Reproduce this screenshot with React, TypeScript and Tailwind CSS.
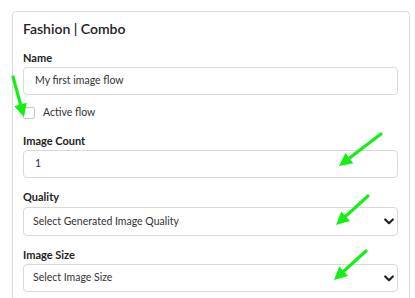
import React from 'react'

const font = { fontFamily: 'Lato, "Open Sans", sans-serif' }

// green annotation arrow, drawn over the form
function Arrow({ x1, y1, x2, y2 }: { x1: number; y1: number; x2: number; y2: number }) {
  const dx = x2 - x1
  const dy = y2 - y1
  const len = Math.sqrt(dx * dx + dy * dy)
  const ux = dx / len
  const uy = dy / len
  const hl = 13
  const hw = 6.5
  const bx = x2 - ux * hl
  const by = y2 - uy * hl
  const p1 = `${bx - uy * hw},${by + ux * hw}`
  const p2 = `${bx + uy * hw},${by - ux * hw}`
  return (
    <g>
      <line x1={x1} y1={y1} x2={bx + ux * 2} y2={by + uy * 2} stroke="#14f014" strokeWidth={3.2} strokeLinecap="round" />
      <polygon points={`${x2},${y2} ${p1} ${p2}`} fill="#14f014" />
    </g>
  )
}

function Chevron() {
  return (
    <svg width="10" height="7" viewBox="0 0 10 7" className="shrink-0">
      <path d="M1.2 1.5 L5 5.2 L8.8 1.5" fill="none" stroke="#222" strokeWidth="2.2" strokeLinecap="round" strokeLinejoin="round" />
    </svg>
  )
}

function Label({ children, className }: { children: React.ReactNode; className?: string }) {
  return (
    <div className={`h-[14px] leading-[14px] text-[11px] font-bold text-[#222] ${className ?? ''}`}>{children}</div>
  )
}

export default function App() {
  return (
    <div className="relative w-[415px] h-[298px] overflow-hidden bg-white" style={font}>
      <div className="mt-[11px] ml-[12px] w-[398px] h-[300px] border border-[#dcdcdc] rounded-[4px] pt-[7px] pl-[10px] pr-[11px]">
        <div className="h-[20px] leading-[20px] text-[14px] font-semibold text-[#222]">Fashion | Combo</div>

        <Label className="mt-[12px]">Name</Label>
        <div className="mt-[2px] h-[28px] border border-[#d9d9d9] rounded-[4px] flex items-center pl-[11px] text-[10.5px] text-[#333]">
          My first image flow
        </div>

        <div className="mt-[11px] h-[14px] flex items-center">
          <div className="w-[12px] h-[12px] border border-[#c8c8c8] rounded-[2px] bg-white" />
          <span className="ml-[8px] text-[10.5px] text-[#333]">Active flow</span>
        </div>

        <Label className="mt-[14px]">Image Count</Label>
        <div className="mt-[2px] h-[28px] border border-[#d9d9d9] rounded-[4px] flex items-center pl-[11px] text-[10.5px] text-[#1c2a4a]">
          1
        </div>

        <Label className="mt-[12px]">Quality</Label>
        <div className="mt-[3px] h-[29px] border border-[#d9d9d9] rounded-[4px] flex items-center justify-between pl-[9px] pr-[3px] text-[10.5px] text-[#333]">
          <span>Select Generated Image Quality</span>
          <Chevron />
        </div>

        <Label className="mt-[12px]">Image Size</Label>
        <div className="mt-[2px] h-[28px] border border-[#d9d9d9] rounded-[4px] flex items-center justify-between pl-[9px] pr-[3px] text-[10.5px] text-[#333]">
          <span>Select Image Size</span>
          <Chevron />
        </div>
      </div>

      <svg className="absolute inset-0 pointer-events-none" width="415" height="298">
        <Arrow x1={13} y1={77} x2={24} y2={117} />
        <Arrow x1={381} y1={134} x2={339} y2={166} />
        <Arrow x1={368} y1={196} x2={336} y2={225} />
        <Arrow x1={366} y1={251} x2={334} y2={280} />
      </svg>
    </div>
  )
}
